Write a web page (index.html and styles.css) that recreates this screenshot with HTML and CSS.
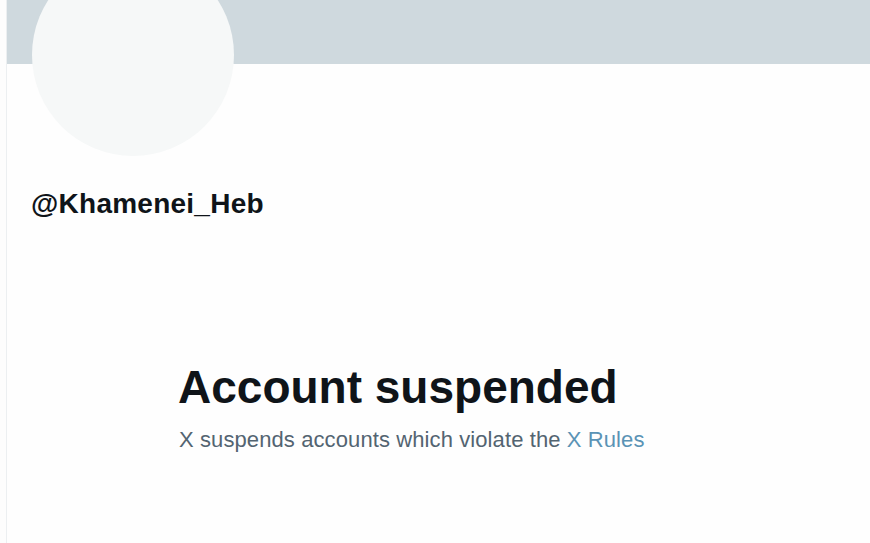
FILE: index.html
```html
<!DOCTYPE html>
<html lang="en">
<head>
  <meta charset="UTF-8">
  <meta name="viewport" content="width=device-width, initial-scale=1.0">
  <title>Account suspended</title>
  <link rel="stylesheet" href="styles.css">
</head>
<body>

  <div id="profile">
    <div class="banner"></div>

    <div class="profile-head">
      <div class="avatar"></div>
      <div class="handle">@Khamenei_Heb</div>
    </div>

    <div class="suspended">
      <h1>Account suspended</h1>
      <p>X suspends accounts which violate the <a href="#">X Rules</a></p>
    </div>
  </div>

</body>
</html>
```

FILE: styles.css
```css
body {
  margin: 0;
  padding: 0;
  background-color: #fdfdfd;
  font-family: 'Liberation Sans', Arial, sans-serif;
  color: #0f1419;
  overflow: hidden;
}

#profile {
  margin-left: 6px;
  min-height: 543px;
  border-left: 1px solid #eceff1;
  background-color: #fefefe;
}

.banner {
  height: 64px;
  background-color: #cfd9de;
}

.profile-head {
  padding-left: 25px;
}

.avatar {
  width: 202px;
  height: 202px;
  margin-top: -110px;
  border-radius: 50%;
  background-color: #f6f8f8;
}

.handle {
  margin-top: 31px;
  margin-left: -1px;
  font-size: 28px;
  line-height: 34px;
  font-weight: bold;
  letter-spacing: 0.25px;
}

.suspended {
  padding-left: 171px;
  margin-top: 140px;
}

.suspended h1 {
  margin: 0;
  font-size: 46px;
  line-height: 52px;
  font-weight: bold;
  letter-spacing: 0;
}

.suspended p {
  margin: 13px 0 0 1px;
  font-size: 22px;
  line-height: 28px;
  letter-spacing: 0.1px;
  color: #536471;
}

.suspended a {
  color: #5a93b5;
  text-decoration: none;
}
```
